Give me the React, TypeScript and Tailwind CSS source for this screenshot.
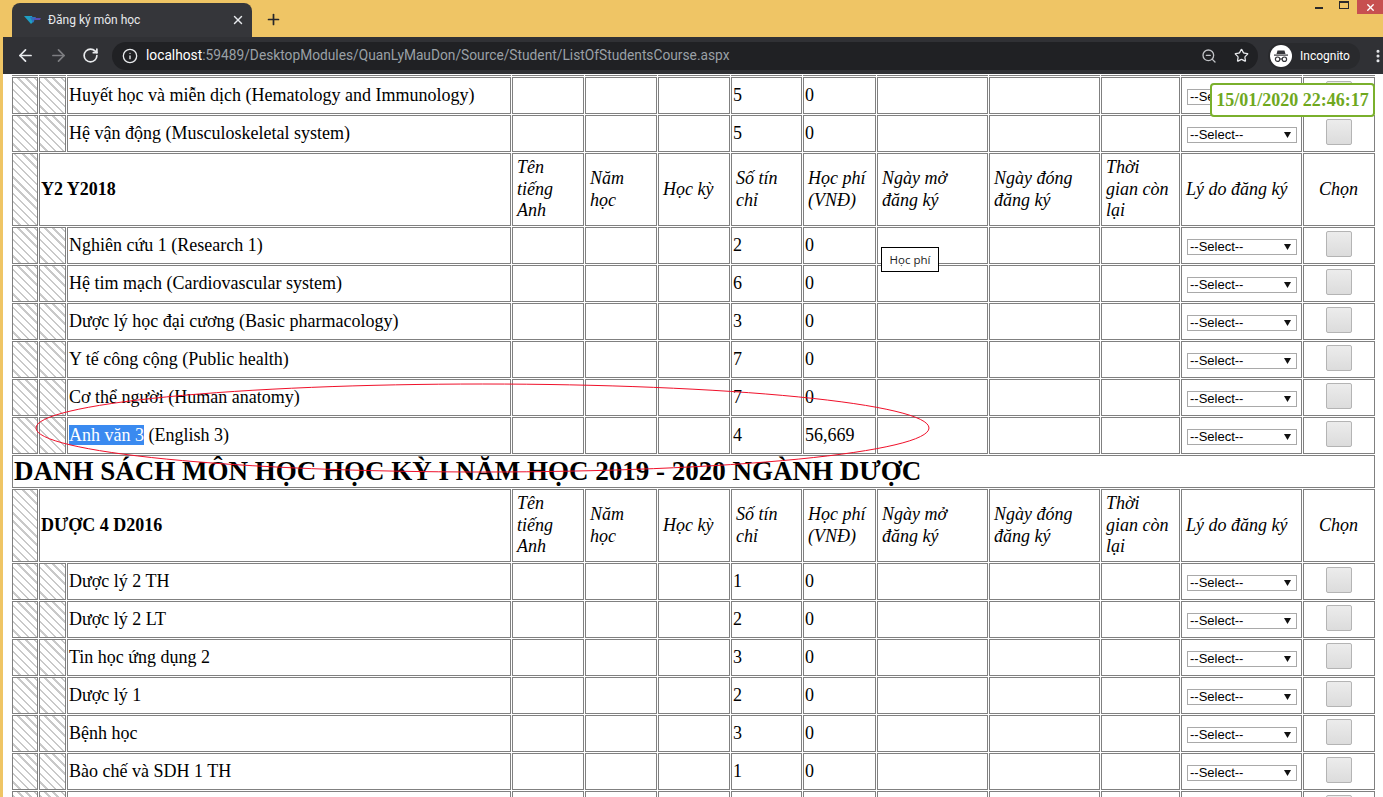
import { ArrowLeft, ArrowRight, Info, MoreVertical, Plus, RotateCw, Star, X, ZoomOut } from "lucide-react";

const serif = "font-['Liberation_Serif',serif]";
const hatch =
  "bg-[repeating-linear-gradient(45deg,#ffffff_0px,#ffffff_4.2px,#c9c9c9_4.2px,#c9c9c9_5.8px)]";
const cell = "border border-[#808080] p-[1px] align-middle";

const widths = [26, 27, 444, 72, 72, 72, 71, 73, 111, 111, 79, 121, 72];

function Hatch() {
  return <td className={`${cell} ${hatch} h-[37px]`} />;
}

function SelectBox() {
  return (
    <div className="ml-[4px] mt-[2px] flex h-[16px] w-[110px] items-center justify-between border border-[#a9a9a9] bg-white pl-[2px] pr-[5px] font-['Liberation_Sans',sans-serif] text-[13px] leading-none text-black">
      <span>--Select--</span>
      <svg width="7" height="6" viewBox="0 0 7 6">
        <path d="M0 0h7L3.5 6z" fill="#111" />
      </svg>
    </div>
  );
}

function SquareButton() {
  return (
    <div className="mx-auto h-[26px] w-[26px] rounded-[2px] border border-[#b4b4b4] bg-gradient-to-b from-[#ececec] to-[#dcdcdc]" />
  );
}

function Row({ name, credits, fee, selected, rest, noSelect }: { name: string; credits: string; fee: string; selected?: boolean; rest?: string; noSelect?: boolean }) {
  return (
    <tr>
      <Hatch />
      <Hatch />
      <td className={cell}>
        {selected ? <span className="bg-[#3a8af0] text-white">{name}</span> : name}
        {rest}
      </td>
      <td className={cell} />
      <td className={cell} />
      <td className={cell} />
      <td className={cell}>{credits}</td>
      <td className={cell}>{fee}</td>
      <td className={cell} />
      <td className={cell} />
      <td className={cell} />
      <td className={cell}>{noSelect ? null : <SelectBox />}</td>
      <td className={`${cell} !align-top pt-[3px]`}>
        <SquareButton />
      </td>
    </tr>
  );
}

function HeaderRow({ title }: { title: string }) {
  const head = `${cell} pl-[4px] pr-[5px] italic font-normal text-left h-[73px] leading-[21.5px]`;
  return (
    <tr>
      <td className={`${cell} ${hatch} h-[73px]`} />
      <td colSpan={2} className={`${cell} pl-[1px] font-bold`}>
        {title}
      </td>
      <td className={head}>Tên tiếng Anh</td>
      <td className={head}>Năm học</td>
      <td className={head}>Học kỳ</td>
      <td className={head}>Số tín chỉ</td>
      <td className={head}>Học phí (VNĐ)</td>
      <td className={head}>Ngày mở đăng ký</td>
      <td className={head}>Ngày đóng đăng ký</td>
      <td className={head}>Thời gian còn lại</td>
      <td className={head}>Lý do đăng ký</td>
      <td className={`${head} !text-center`}>Chọn</td>
    </tr>
  );
}

function Incognito() {
  return (
    <svg width="22" height="22" viewBox="0 0 22 22" className="shrink-0">
      <circle cx="11" cy="11" r="11" fill="#fff" />
      <path d="M7.5 5.5h7l1 3.5H6.5z" fill="#35363a" />
      <path d="M4 9.5h14v1.2H4z" fill="#35363a" />
      <circle cx="7.6" cy="14.2" r="2.2" fill="none" stroke="#35363a" strokeWidth="1.2" />
      <circle cx="14.4" cy="14.2" r="2.2" fill="none" stroke="#35363a" strokeWidth="1.2" />
      <path d="M9.8 14h2.4" stroke="#35363a" strokeWidth="1.1" />
    </svg>
  );
}

function Favicon() {
  return (
    <svg width="17" height="8" viewBox="0 0 17 8">
      <path d="M0 0h8l2 5-3 3z" fill="#1f9fc4" />
      <path d="M6 1h6l-3 6z" fill="#2f6fc0" />
      <path d="M11 2h6l-1 2h-6z" fill="#5b4bb5" />
    </svg>
  );
}

export default function App() {
  return (
    <div className={`relative flex h-[797px] w-[1383px] overflow-hidden bg-[#efc565]`}>
      <div className="w-[3px] shrink-0" />
      <div className="flex min-w-0 flex-1 flex-col">
        {/* Title bar */}
        <div className="flex h-[37px] shrink-0 items-end pl-[9px]">
          <div className="relative flex h-[34px] w-[240px] items-center rounded-t-[8px] bg-[#35363a] pl-[12px] pr-[7px] font-['Roboto',sans-serif] text-[12px] text-[#e8eaed]">
            <Favicon />
            <span className="ml-[7px] flex-1">Đăng ký môn học</span>
            <X size={14} strokeWidth={2.4} className="text-[#e8eaed]" />
          </div>
          <Plus size={17} strokeWidth={2.4} className="mb-[9px] ml-[13px] text-[#26262a]" />
          <div className="flex-1" />
          <div className="mb-[23px] flex h-[14px] items-start">
            <div className="mr-[16px] mt-[7px] h-[2px] w-[8px] bg-[#2a2a2a]" />
            <div className="mr-[8px] mt-[1px] h-[8px] w-[10px] border border-t-2 border-[#2a2a2a]" />
            <div className="flex h-[14px] w-[26px] items-center justify-center bg-[#c75050]">
              <X size={11} strokeWidth={3} className="text-white" />
            </div>
          </div>
        </div>
        {/* Toolbar */}
        <div className="flex h-[37px] shrink-0 items-center bg-[#303135] pl-[13px] text-[#e8eaed]">
          <ArrowLeft size={19} strokeWidth={2.2} className="shrink-0" />
          <ArrowRight size={19} strokeWidth={2.2} className="ml-[14px] shrink-0 text-[#7d7e82]" />
          <RotateCw size={17} strokeWidth={2.4} className="ml-[14px] shrink-0" />
          <div className="ml-[13px] flex h-[28px] w-[1146px] shrink-0 items-center rounded-full bg-[#202124] pl-[10px] pr-[9px] font-['Roboto',sans-serif] text-[13.75px]">
            <Info size={16} strokeWidth={2} className="shrink-0" />
            <span className="ml-[8px] text-white">localhost</span>
            <span className="text-[#9aa0a6]">:59489/DesktopModules/QuanLyMauDon/Source/Student/ListOfStudentsCourse.aspx</span>
            <span className="flex-1" />
            <ZoomOut size={16} strokeWidth={2} className="shrink-0 text-[#c0c2c6]" />
            <Star size={15} strokeWidth={2} className="ml-[17px] shrink-0" />
          </div>
          <div className="ml-[10px] flex h-[26px] w-[92px] shrink-0 items-center rounded-full bg-[#292a2d] pl-[2px] font-['Roboto',sans-serif] text-[12px] text-white">
            <Incognito />
            <span className="ml-[8px]">Incognito</span>
          </div>
          <MoreVertical size={16} strokeWidth={2.6} className="ml-[10px] shrink-0" />
        </div>
        {/* Page */}
        <div className="min-h-0 flex-1 overflow-hidden bg-white pl-[8px]">
          <table className={`w-[1365px] table-fixed border-separate border-spacing-[1px] ${serif} text-[18px] leading-[21px] text-black`}>
            <colgroup>
              {widths.map((w, i) => (
                <col key={i} style={{ width: w }} />
              ))}
            </colgroup>
            <tbody>
              <tr>
                {widths.map((_, i) => (
                  <td key={i} className="h-[1px] border-b border-[#808080] p-0" />
                ))}
              </tr>
              <Row name="Huyết học và miễn dịch (Hematology and Immunology)" credits="5" fee="0" />
              <Row name="Hệ vận động (Musculoskeletal system)" credits="5" fee="0" />
              <HeaderRow title="Y2 Y2018" />
              <Row name="Nghiên cứu 1 (Research 1)" credits="2" fee="0" />
              <Row name="Hệ tim mạch (Cardiovascular system)" credits="6" fee="0" />
              <Row name="Dược lý học đại cương (Basic pharmacology)" credits="3" fee="0" />
              <Row name="Y tế công cộng (Public health)" credits="7" fee="0" />
              <Row name="Cơ thể người (Human anatomy)" credits="7" fee="0" />
              <Row name="Anh văn 3" selected rest=" (English 3)" credits="4" fee="56,669" />
              <tr>
                <td colSpan={13} className={`${cell} h-[33px] text-[27px] font-bold leading-[29px]`}>
                  DANH SÁCH MÔN HỌC HỌC KỲ I NĂM HỌC 2019 - 2020 NGÀNH DƯỢC
                </td>
              </tr>
              <HeaderRow title="DƯỢC 4 D2016" />
              <Row name="Dược lý 2 TH" credits="1" fee="0" />
              <Row name="Dược lý 2 LT" credits="2" fee="0" />
              <Row name="Tin học ứng dụng 2" credits="3" fee="0" />
              <Row name="Dược lý 1" credits="2" fee="0" />
              <Row name="Bệnh học" credits="3" fee="0" />
              <Row name="Bào chế và SDH 1 TH" credits="1" fee="0" />
              <Row name="" credits="" fee="" noSelect />
            </tbody>
          </table>
        </div>
      </div>
      {/* Hover tooltip */}
      <div className="absolute left-[881px] top-[247px] flex h-[25px] w-[58px] items-center justify-center border border-black bg-white font-['Open_Sans',sans-serif] text-[11.5px] text-[#222]">
        Học phí
      </div>
      {/* Clock badge */}
      <div className={`absolute left-[1210px] top-[83px] flex h-[34px] w-[165px] items-center justify-center rounded-[4px] border-2 border-[#7ab02c] bg-white ${serif} text-[18px] font-bold text-[#6fa81e]`}>
        15/01/2020 22:46:17
      </div>
      {/* Hand-drawn annotation */}
      <svg className="pointer-events-none absolute left-0 top-0" width="1383" height="797">
        <ellipse cx="482.5" cy="428" rx="446.5" ry="44" fill="none" stroke="#f0102a" strokeWidth="1" />
      </svg>
    </div>
  );
}
